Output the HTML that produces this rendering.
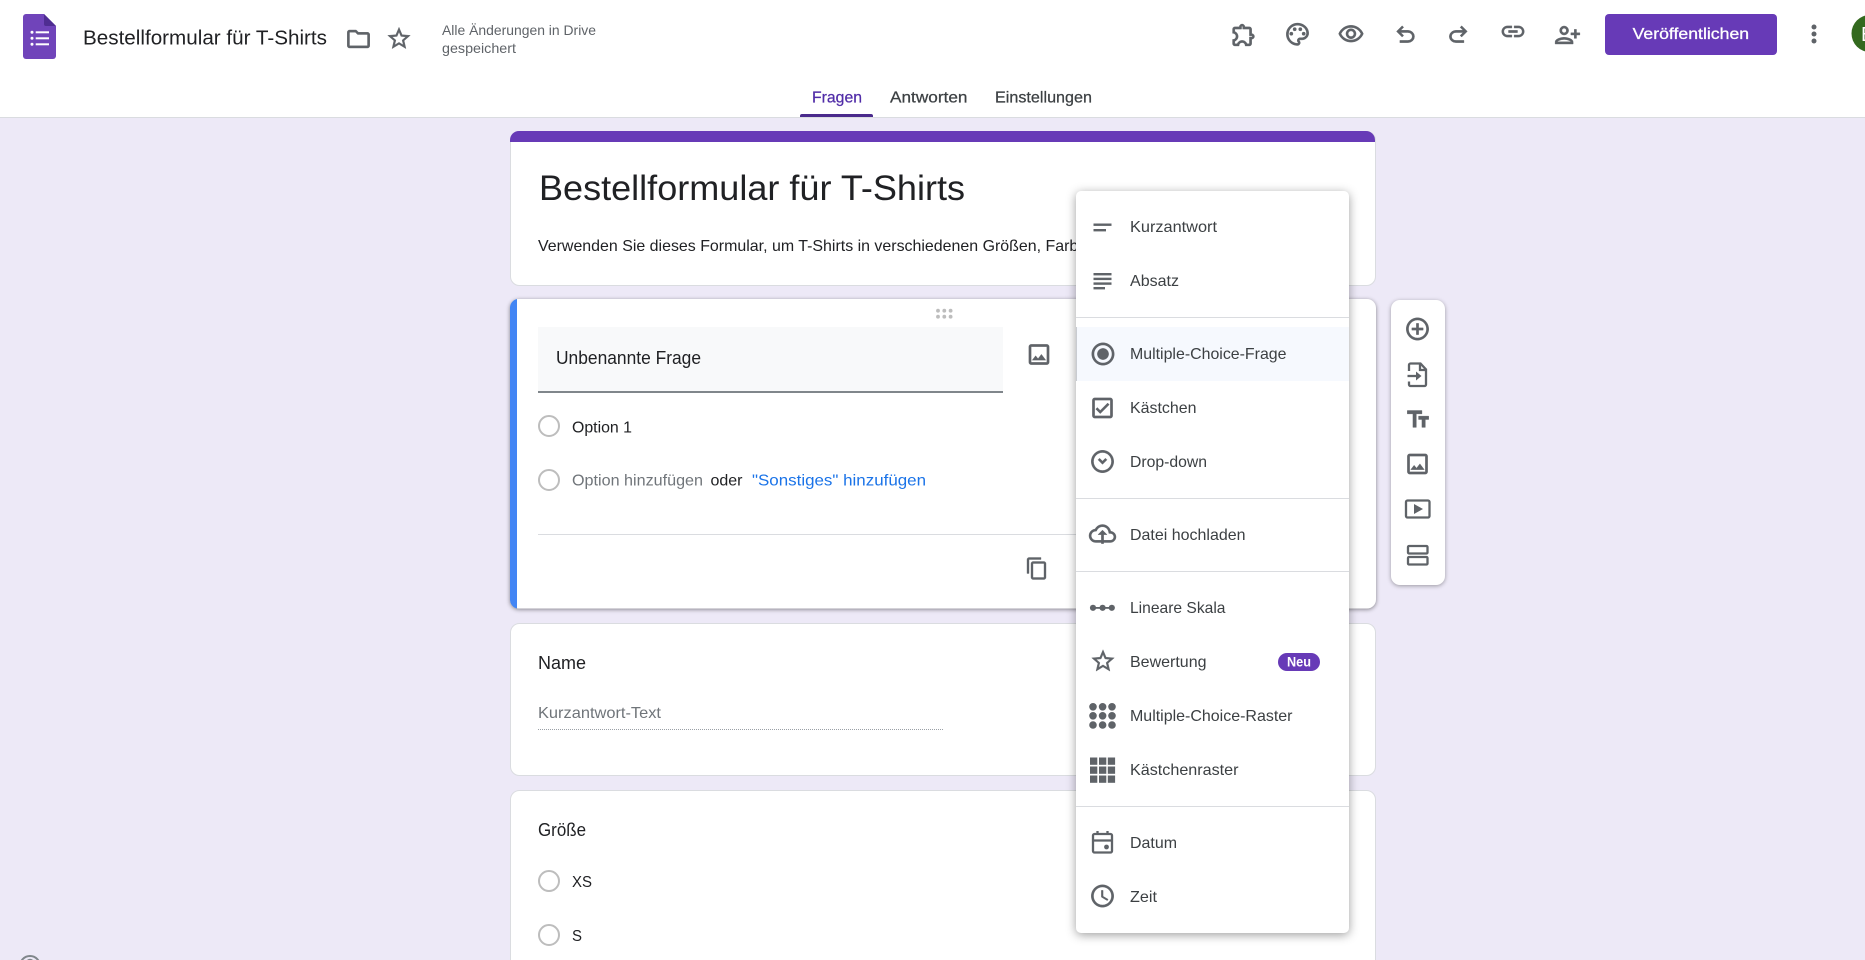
<!DOCTYPE html>
<html lang="de">
<head>
<meta charset="utf-8">
<title>Bestellformular für T-Shirts</title>
<style>
html,body{margin:0;padding:0;width:1865px;height:960px;overflow:hidden;background:#ede9f7}
svg{display:block;position:absolute;left:0;top:0}
text{font-family:"Liberation Sans",Arial,sans-serif;white-space:pre}
.ico{fill:#5f6368;stroke:#5f6368;stroke-width:.35}
.ic2{fill:#5f6368}
.m{font-size:15.75px;fill:#3c4043}
.o{font-size:16px;fill:#202124}
.card{fill:#fff;stroke:#dadce0;stroke-width:1}
</style>
</head>
<body>
<svg width="1865" height="960" viewBox="0 0 1865 960" xmlns="http://www.w3.org/2000/svg">
<defs>
<path id="image" d="M19 5v14H5V5h14m0-2H5c-1.1 0-2 .9-2 2v14c0 1.1.9 2 2 2h14c1.1 0 2-.9 2-2V5c0-1.1-.9-2-2-2zm-4.86 8.86l-3 3.87L9 13.14 6 17h12l-3.86-5.14z"/>
<path id="star" d="M22 9.24l-7.19-.62L12 2 9.19 8.63 2 9.24l5.46 4.73L5.82 21 12 17.27 18.18 21l-1.63-7.03L22 9.24zM12 15.4l-3.76 2.27 1-4.28-3.32-2.88 4.38-.38L12 6.1l1.71 4.04 4.38.38-3.32 2.88 1 4.28L12 15.4z"/>
</defs>

<!-- page background -->
<rect x="0" y="0" width="1865" height="960" fill="#ede9f7"/>

<!-- header -->
<rect x="0" y="0" width="1865" height="117" fill="#fff"/>
<rect x="0" y="117" width="1865" height="1" fill="#dadce0"/>

<!-- logo -->
<path d="M26 14H44L56 26V56a3 3 0 0 1-3 3H26a3 3 0 0 1-3-3V17a3 3 0 0 1 3-3z" fill="#7044ba"/>
<path d="M44 14L56 26H46a2 2 0 0 1-2-2z" fill="#4f2d92"/>
<g fill="#fff">
<circle cx="32" cy="32.3" r="1.5"/><circle cx="32" cy="38.3" r="1.5"/><circle cx="32" cy="44.3" r="1.5"/>
<rect x="35.7" y="31.3" width="13.3" height="2"/><rect x="35.7" y="37.3" width="13.3" height="2"/><rect x="35.7" y="43.3" width="13.3" height="2"/>
</g>

<text x="83" y="44.5" font-size="20" fill="#202124" textLength="244" lengthAdjust="spacingAndGlyphs">Bestellformular für T-Shirts</text>

<path class="ico" transform="translate(345,25.5) scale(1.125)" d="M9.17 6l2 2H20v10H4V6h5.17M10 4H4c-1.1 0-1.99.9-1.99 2L2 18c0 1.1.9 2 2 2h16c1.1 0 2-.9 2-2V8c0-1.1-.9-2-2-2h-8l-2-2z"/>
<use href="#star" class="ico" transform="translate(385.5,25) scale(1.125)"/>

<text x="442" y="35" font-size="14" fill="#5f6368" textLength="154" lengthAdjust="spacingAndGlyphs">Alle Änderungen in Drive</text>
<text x="442" y="53" font-size="14" fill="#5f6368" textLength="74" lengthAdjust="spacingAndGlyphs">gespeichert</text>

<!-- header right icons -->
<path class="ico" transform="translate(1230.3,21.2) scale(1.125)" d="M10.5 4.5c.28 0 .5.22.5.5v2h6v6h2c.28 0 .5.22.5.5s-.22.5-.5.5h-2v6h-2.12c-.68-1.75-2.39-3-4.38-3s-3.7 1.25-4.38 3H4v-2.12c1.75-.68 3-2.39 3-4.38 0-1.99-1.24-3.7-2.99-4.38L4 7h6V5c0-.28.22-.5.5-.5m0-2C9.12 2.5 8 3.62 8 5H4c-1.1 0-1.99.9-1.99 2v3.8h.29c1.49 0 2.7 1.21 2.7 2.7s-1.21 2.7-2.7 2.7H2V20c0 1.1.9 2 2 2h3.8v-.3c0-1.49 1.21-2.7 2.7-2.7s2.7 1.21 2.7 2.7v.3H17c1.1 0 2-.9 2-2v-4c1.38 0 2.5-1.12 2.5-2.5S20.38 11 19 11V7c0-1.1-.9-2-2-2h-4c0-1.38-1.12-2.5-2.5-2.5z"/>
<g class="ico" transform="translate(1284,20.8) scale(1.125)">
<path d="M12 22C6.49 22 2 17.51 2 12S6.49 2 12 2s10 4.04 10 9c0 3.31-2.69 6-6 6h-1.77c-.28 0-.5.22-.5.5 0 .12.05.23.13.33.41.47.64 1.06.64 1.67 0 1.38-1.12 2.5-2.5 2.5zm0-18c-4.41 0-8 3.59-8 8s3.59 8 8 8c.28 0 .5-.22.5-.5 0-.16-.08-.28-.14-.35-.41-.46-.63-1.05-.63-1.65 0-1.38 1.12-2.5 2.5-2.5H16c2.21 0 4-1.79 4-4 0-3.86-3.59-7-8-7z"/>
<circle cx="6.5" cy="11.5" r="1.5"/><circle cx="9.5" cy="7.5" r="1.5"/><circle cx="14.5" cy="7.5" r="1.5"/><circle cx="17.5" cy="11.5" r="1.5"/>
</g>
<path class="ico" transform="translate(1337.5,20.8) scale(1.125)" d="M12 6c3.79 0 7.17 2.13 8.82 5.5C19.17 14.87 15.79 17 12 17s-7.17-2.13-8.82-5.5C4.83 8.13 8.21 6 12 6m0-2C7 4 2.73 7.11 1 11.5 2.73 15.89 7 19 12 19s9.27-3.11 11-7.5C21.27 7.11 17 4 12 4zm0 5c1.38 0 2.5 1.12 2.5 2.5S13.38 14 12 14s-2.5-1.12-2.5-2.5S10.62 9 12 9m0-2c-2.48 0-4.5 2.02-4.5 4.5S9.52 16 12 16s4.5-2.02 4.5-4.5S14.48 7 12 7z"/>
<path class="ic2" transform="translate(1392,21.3) scale(1.125) translate(0,24) scale(.025)" stroke="#5f6368" stroke-width="14" d="M280-200v-80h284q63 0 109.5-40T720-420q0-60-46.5-100T564-560H312l104 104-56 56-200-200 200-200 56 56-104 104h252q97 0 166.5 63T800-420q0 94-69.5 157T564-200H280Z"/>
<path class="ic2" transform="translate(1444.8,21.3) scale(1.125) translate(0,24) scale(.025)" stroke="#5f6368" stroke-width="14" d="M396-200q-97 0-166.5-63T160-420q0-94 69.5-157T396-640h252L544-744l56-56 200 200-200 200-56-56 104-104H396q-63 0-109.5 40T240-420q0 60 46.5 100T396-280h284v80H396Z"/>
<path class="ico" transform="translate(1499.5,18) scale(1.125)" d="M3.9 12c0-1.71 1.39-3.1 3.1-3.1h4V7H7c-2.76 0-5 2.24-5 5s2.24 5 5 5h4v-1.9H7c-1.71 0-3.1-1.39-3.1-3.1zM8 13h8v-2H8v2zm9-6h-4v1.9h4c1.71 0 3.1 1.39 3.1 3.1s-1.39 3.1-3.1 3.1h-4V17h4c2.76 0 5-2.24 5-5s-2.24-5-5-5z"/>
<path class="ico" transform="translate(1581,21.5) scale(-1.125,1.125)" d="M15 12c2.21 0 4-1.79 4-4s-1.79-4-4-4-4 1.79-4 4 1.79 4 4 4zm0-6c1.1 0 2 .9 2 2s-.9 2-2 2-2-.9-2-2 .9-2 2-2zm0 8c-2.67 0-8 1.34-8 4v2h16v-2c0-2.66-5.33-4-8-4zm-6 4c.22-.72 3.31-2 6-2 2.7 0 5.8 1.29 6 2H9zm-3-3v-3h3v-2H6V7H4v3H1v2h3v3h2z"/>

<!-- publish button -->
<rect x="1605" y="14" width="172" height="41" rx="4" fill="#673ab7"/>
<text x="1632.6" y="39.2" font-size="16" fill="#fff" stroke="#fff" stroke-width=".3" textLength="116.5" lengthAdjust="spacingAndGlyphs">Veröffentlichen</text>

<g class="ic2"><circle cx="1814" cy="27" r="2.5"/><circle cx="1814" cy="34" r="2.5"/><circle cx="1814" cy="41" r="2.5"/></g>
<circle cx="1870" cy="33.5" r="18.5" fill="#33691e"/>
<text x="1861" y="41" font-size="20" fill="#fff">B</text>

<!-- tabs -->
<text x="812" y="102.5" font-size="16" fill="#512da8" stroke="#512da8" stroke-width=".25" textLength="50" lengthAdjust="spacingAndGlyphs">Fragen</text>
<text x="890" y="102.5" font-size="16" fill="#3c4043" stroke="#3c4043" stroke-width=".25" textLength="77.5" lengthAdjust="spacingAndGlyphs">Antworten</text>
<text x="995" y="102.5" font-size="16" fill="#3c4043" stroke="#3c4043" stroke-width=".25" textLength="97" lengthAdjust="spacingAndGlyphs">Einstellungen</text>
<path d="M800 117v-1a2 2 0 0 1 2-2h69a2 2 0 0 1 2 2v1z" fill="#4a2a8c"/>

<!-- title card -->
<rect class="card" x="510.5" y="131.5" width="865" height="154" rx="9"/>
<path d="M510 142v-2a9 9 0 0 1 9-9h847a9 9 0 0 1 9 9v2z" fill="#673ab7"/>
<text x="539" y="200" font-size="35" fill="#202124" textLength="426" lengthAdjust="spacingAndGlyphs">Bestellformular für T-Shirts</text>
<text x="538" y="251" font-size="16" fill="#202124" textLength="558" lengthAdjust="spacingAndGlyphs">Verwenden Sie dieses Formular, um T-Shirts in verschiedenen Größen, Farben</text>

<!-- active question card -->
<rect x="510" y="299" width="866" height="309.5" rx="9" fill="#fff" style="filter:drop-shadow(0 1px 2px rgba(0,0,0,.45))"/>
<path d="M517 299V608.5A9 9 0 0 1 510 599.5V308A9 9 0 0 1 517 299z" fill="#4285f4"/>
<g fill="#bdbdbd">
<circle cx="938" cy="310.7" r="1.9"/><circle cx="944.3" cy="310.7" r="1.9"/><circle cx="950.6" cy="310.7" r="1.9"/>
<circle cx="938" cy="316.7" r="1.9"/><circle cx="944.3" cy="316.7" r="1.9"/><circle cx="950.6" cy="316.7" r="1.9"/>
</g>
<rect x="538" y="327" width="465" height="64" fill="#f8f9fa"/>
<rect x="538" y="391" width="465" height="2" fill="#80868b"/>
<text x="556" y="364" font-size="18" fill="#202124" textLength="145" lengthAdjust="spacingAndGlyphs">Unbenannte Frage</text>
<use href="#image" class="ico" transform="translate(1025.5,341) scale(1.125)"/>

<circle cx="549" cy="426" r="10" fill="none" stroke="#bdbdbd" stroke-width="2"/>
<text class="o" x="572" y="432.5" textLength="60" lengthAdjust="spacingAndGlyphs">Option 1</text>
<circle cx="549" cy="480" r="10" fill="none" stroke="#bdbdbd" stroke-width="2"/>
<text x="572" y="485.5" font-size="16" fill="#70757a" textLength="131" lengthAdjust="spacingAndGlyphs">Option hinzufügen</text>
<text class="o" x="710.5" y="485.5" textLength="32" lengthAdjust="spacingAndGlyphs">oder</text>
<text x="752" y="485.5" font-size="16" fill="#1a73e8" textLength="174" lengthAdjust="spacingAndGlyphs">"Sonstiges" hinzufügen</text>
<rect x="538" y="534" width="540" height="1" fill="#dadce0"/>
<path class="ico" transform="translate(1025,556.5)" d="M16 1H4c-1.1 0-2 .9-2 2v14h2V3h12V1zm3 4H8c-1.1 0-2 .9-2 2v14c0 1.1.9 2 2 2h11c1.1 0 2-.9 2-2V7c0-1.1-.9-2-2-2zm0 16H8V7h11v14z"/>

<!-- name card -->
<rect class="card" x="510.5" y="623.5" width="865" height="152" rx="9"/>
<text x="538" y="669" font-size="18" fill="#202124" textLength="48" lengthAdjust="spacingAndGlyphs">Name</text>
<text x="538" y="718" font-size="15.75" fill="#70757a" textLength="123" lengthAdjust="spacingAndGlyphs">Kurzantwort-Text</text>
<line x1="538" y1="729.5" x2="944" y2="729.5" stroke="#9aa0a6" stroke-width="1" stroke-dasharray="1 1"/>

<!-- size card -->
<rect class="card" x="510.5" y="790.5" width="865" height="200" rx="9"/>
<text x="538" y="836" font-size="18" fill="#202124" textLength="48" lengthAdjust="spacingAndGlyphs">Größe</text>
<circle cx="549" cy="881" r="10" fill="none" stroke="#bdbdbd" stroke-width="2"/>
<text class="o" x="572" y="887" textLength="20" lengthAdjust="spacingAndGlyphs">XS</text>
<circle cx="549" cy="935" r="10" fill="none" stroke="#bdbdbd" stroke-width="2"/>
<text class="o" x="572" y="941" textLength="10" lengthAdjust="spacingAndGlyphs">S</text>

<!-- help icon -->
<circle cx="30" cy="966" r="10" fill="none" stroke="#80868b" stroke-width="2"/>
<path d="M26.5 963a3.5 3.5 0 0 1 7 0" fill="none" stroke="#80868b" stroke-width="1.6"/>

<!-- side toolbar -->
<rect x="1391" y="300" width="54" height="285" rx="9" fill="#fff" style="filter:drop-shadow(0 1px 2px rgba(0,0,0,.35))"/>
<path class="ico" transform="translate(1404,315.5) scale(1.125)" d="M13 7h-2v4H7v2h4v4h2v-4h4v-2h-4V7zm-1-5C6.48 2 2 6.48 2 12s4.48 10 10 10 10-4.48 10-10S17.52 2 12 2zm0 18c-4.41 0-8-3.59-8-8s3.59-8 8-8 8 3.59 8 8-3.59 8-8 8z"/>
<g fill="none" stroke="#5f6368" stroke-width="2.3">
<path d="M1409 371v-6a1.500 1.500 0 0 1 1.500-1.500h10l5.500 6v15a1.500 1.500 0 0 1-1.500 1.500h-14a1.500 1.500 0 0 1-1.500-1.500v-3"/>
<path d="M1420 364v6h6"/>
<path d="M1407.500 376h11"/>
</g>
<path d="M1416 371.500l5.500 4.500-5.500 4.500z" fill="#5f6368"/>
<path class="ico" transform="translate(1404.500,406) scale(1.125)" d="M2.500 4v3h5v12h3V7h5V4h-13zm19 5h-9v3h3v7h3v-7h3V9z"/>
<use href="#image" class="ico" transform="translate(1404,450.500) scale(1.125)"/>
<rect x="1406" y="500.500" width="23.500" height="17" rx="1.500" fill="none" stroke="#5f6368" stroke-width="2.300"/>
<path d="M1414 504l9 5-9 5z" fill="#5f6368"/>
<g fill="none" stroke="#5f6368" stroke-width="2.300">
<rect x="1408" y="546" width="19.500" height="7.500" rx="1"/>
<rect x="1408" y="557" width="19.500" height="7.500" rx="1"/>
</g>

<!-- dropdown menu -->
<rect x="1076" y="191" width="273" height="742" rx="5" fill="#fff" style="filter:drop-shadow(0 2px 5px rgba(0,0,0,.38))"/>
<rect x="1076" y="327" width="273" height="54" fill="#f6f9fe"/>
<rect x="1076" y="327" width="1" height="54" fill="#c9ccd1"/>
<g fill="#dadce0">
<rect x="1076" y="317" width="273" height="1"/>
<rect x="1076" y="498" width="273" height="1"/>
<rect x="1076" y="571" width="273" height="1"/>
<rect x="1076" y="806" width="273" height="1"/>
</g>

<text class="m" x="1130" y="232" textLength="87" lengthAdjust="spacingAndGlyphs">Kurzantwort</text>
<text class="m" x="1130" y="286" textLength="49" lengthAdjust="spacingAndGlyphs">Absatz</text>
<text class="m" x="1130" y="359" textLength="156.500" lengthAdjust="spacingAndGlyphs">Multiple-Choice-Frage</text>
<text class="m" x="1130" y="413" textLength="66.500" lengthAdjust="spacingAndGlyphs">Kästchen</text>
<text class="m" x="1130" y="467" textLength="77" lengthAdjust="spacingAndGlyphs">Drop-down</text>
<text class="m" x="1130" y="540" textLength="115.500" lengthAdjust="spacingAndGlyphs">Datei hochladen</text>
<text class="m" x="1130" y="613" textLength="95.500" lengthAdjust="spacingAndGlyphs">Lineare Skala</text>
<text class="m" x="1130" y="667" textLength="76.500" lengthAdjust="spacingAndGlyphs">Bewertung</text>
<text class="m" x="1130" y="721" textLength="162.500" lengthAdjust="spacingAndGlyphs">Multiple-Choice-Raster</text>
<text class="m" x="1130" y="775" textLength="108.500" lengthAdjust="spacingAndGlyphs">Kästchenraster</text>
<text class="m" x="1130" y="848" textLength="47" lengthAdjust="spacingAndGlyphs">Datum</text>
<text class="m" x="1130" y="902" textLength="27" lengthAdjust="spacingAndGlyphs">Zeit</text>

<rect x="1278" y="653" width="42" height="18" rx="9" fill="#673ab7"/>
<text x="1287" y="666.500" font-size="14" font-weight="700" fill="#fff" textLength="24" lengthAdjust="spacingAndGlyphs">Neu</text>

<!-- menu icons -->
<g class="ic2">
<rect x="1093.500" y="223.500" width="18" height="2.400"/>
<rect x="1093.500" y="229" width="12.500" height="2.400"/>
<rect x="1093.500" y="273" width="18" height="2.400"/>
<rect x="1093.500" y="277.700" width="18" height="2.400"/>
<rect x="1093.500" y="282.400" width="18" height="2.400"/>
<rect x="1093.500" y="287" width="11.500" height="2.400"/>
</g>
<path class="ico" transform="translate(1089.500,340.500) scale(1.125)" d="M12 7c-2.760 0-5 2.240-5 5s2.240 5 5 5 5-2.240 5-5-2.240-5-5-5zm0-5C6.480 2 2 6.480 2 12s4.480 10 10 10 10-4.480 10-10S17.520 2 12 2zm0 18c-4.420 0-8-3.580-8-8s3.580-8 8-8 8 3.580 8 8-3.580 8-8 8z"/>
<path class="ico" transform="translate(1089,394.500) scale(1.125)" d="M19 3H5c-1.100 0-2 .9-2 2v14c0 1.100.9 2 2 2h14c1.100 0 2-.9 2-2V5c0-1.100-.9-2-2-2zm0 16H5V5h14v14zM17.990 9l-1.410-1.420-6.590 6.590-2.580-2.570-1.420 1.410 4 3.990z"/>
<path class="ico" transform="translate(1089,448) scale(1.125)" d="M12 2C6.480 2 2 6.480 2 12s4.480 10 10 10 10-4.480 10-10S17.520 2 12 2zm0 18c-4.410 0-8-3.590-8-8s3.590-8 8-8 8 3.590 8 8-3.590 8-8 8zm0-5.500L8 10.500l1.400-1.400 2.600 2.600 2.600-2.600 1.400 1.400z"/>
<path class="ico" transform="translate(1089,520) scale(1.125)" d="M19.350 10.040C18.670 6.590 15.640 4 12 4 9.110 4 6.600 5.640 5.350 8.040 2.340 8.360 0 10.910 0 14c0 3.310 2.690 6 6 6h5v-2H6c-2.210 0-4-1.790-4-4 0-2.050 1.530-3.760 3.560-3.970l1.070-.11.500-.95C8.080 7.140 9.940 6 12 6c2.620 0 4.880 1.860 5.390 4.430l.3 1.500 1.530.11c1.560.1 2.780 1.410 2.780 2.960 0 1.650-1.350 3-3 3h-6v2h6c2.760 0 5-2.240 5-5 0-2.640-2.050-4.780-4.650-4.960zM8 13h3v8h2v-8h3l-4-4z"/>
<g class="ic2">
<rect x="1093" y="607" width="19" height="1.800"/>
<circle cx="1093" cy="607.800" r="3.100"/><circle cx="1102.600" cy="607.800" r="3.100"/><circle cx="1111.800" cy="607.800" r="3.100"/>
</g>
<use href="#star" class="ico" transform="translate(1089.500,647.500) scale(1.125)"/>
<g class="ic2">
<circle cx="1093" cy="706.800" r="3.800"/><circle cx="1102.600" cy="706.800" r="3.800"/><circle cx="1112" cy="706.800" r="3.800"/>
<circle cx="1093" cy="715.800" r="3.800"/><circle cx="1102.600" cy="715.800" r="3.800"/><circle cx="1112" cy="715.800" r="3.800"/>
<circle cx="1093" cy="725" r="3.800"/><circle cx="1102.600" cy="725" r="3.800"/><circle cx="1112" cy="725" r="3.800"/>
</g>
<g class="ic2">
<rect x="1090" y="757.500" width="7.300" height="7.300"/><rect x="1099" y="757.500" width="7.300" height="7.300"/><rect x="1107.800" y="757.500" width="7.300" height="7.300"/>
<rect x="1090" y="766.500" width="7.300" height="7.300"/><rect x="1099" y="766.500" width="7.300" height="7.300"/><rect x="1107.800" y="766.500" width="7.300" height="7.300"/>
<rect x="1090" y="775.500" width="7.300" height="7.300"/><rect x="1099" y="775.500" width="7.300" height="7.300"/><rect x="1107.800" y="775.500" width="7.300" height="7.300"/>
</g>
<g fill="none" stroke="#5f6368" stroke-width="2.300">
<rect x="1093" y="834" width="19" height="18.500" rx="1.500"/>
<path d="M1093 840.500h19"/>
<path d="M1097.500 831v4M1107.500 831v4"/>
</g>
<circle cx="1106.500" cy="847" r="2.400" fill="#5f6368"/>
<g class="ico" transform="translate(1089,882.500) scale(1.125)">
<path d="M11.990 2C6.470 2 2 6.480 2 12s4.470 10 9.990 10C17.520 22 22 17.520 22 12S17.520 2 11.990 2zM12 20c-4.420 0-8-3.580-8-8s3.580-8 8-8 8 3.580 8 8-3.580 8-8 8z"/>
<path d="M12.500 7H11v6l5.250 3.150.75-1.230-4.500-2.670z"/>
</g>
</svg>
</body>
</html>
